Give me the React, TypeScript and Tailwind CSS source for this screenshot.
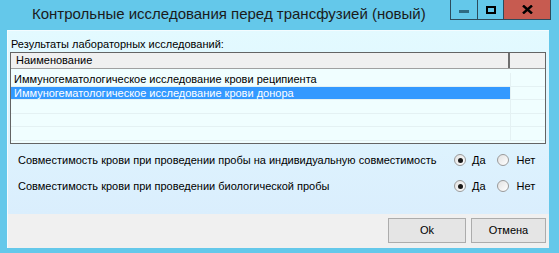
import React from "react";

function Radio({ checked }: { checked: boolean }) {
  return (
    <span className="relative inline-flex h-[12px] w-[12px] items-center justify-center rounded-full border border-[#9a9a9a] bg-gradient-to-br from-[#e2e2e2] to-[#ffffff]">
      {checked && <span className="h-[5px] w-[5px] rounded-full bg-[#1a1a1a]" />}
    </span>
  );
}

function OptionRow({ text }: { text: string }) {
  return (
    <div className="flex h-[26px] items-center">
      <div className="w-[440px] pl-[8px]">{text}</div>
      <div className="flex items-center gap-[6px] pl-[4px]">
        <Radio checked />
        <span>Да</span>
      </div>
      <div className="flex items-center gap-[8px] pl-[11px]">
        <Radio checked={false} />
        <span>Нет</span>
      </div>
    </div>
  );
}

export default function App() {
  const font = { fontFamily: '"Liberation Sans", Arial, sans-serif' };
  return (
    <div className="relative h-[253px] w-[559px] overflow-hidden bg-[#64c8ea] text-[11px] text-black" style={font}>
      {/* title bar */}
      <div className="relative flex h-[30px] items-start">
        <div className="pl-[32px] pt-[4px] text-[15px] leading-[20px] text-[#1b1b1b]">
          Контрольные исследования перед трансфузией (новый)
        </div>
        <div className="absolute left-[450px] top-0 flex h-[20px] border border-t-0 border-[#2c4b5c]">
          <div className="flex w-[27px] items-center justify-center border-r border-[#2c4b5c]">
            <div className="mt-[4px] h-[3px] w-[10px] bg-[#2e6a82]" />
          </div>
          <div className="flex w-[26px] items-center justify-center border-r border-[#2c4b5c]">
            <div className="h-[8px] w-[10px] border-2 border-black" />
          </div>
          <div className="flex w-[46px] items-center justify-center bg-[#c75b50]">
            <svg width="11" height="9" viewBox="0 0 11 9">
              <path d="M1 0.5 L10 8.5 M10 0.5 L1 8.5" stroke="#000" strokeWidth="2.4" />
            </svg>
          </div>
        </div>
      </div>
      {/* client area */}
      <div className="ml-[7px] flex h-[218px] w-[542px] flex-col border-l border-t border-[#f4fcff]">
        <div className="h-[183px] bg-gradient-to-b from-[#e3faff] to-[#daeefd] px-[2px]">
          <div className="pl-[1px] pt-[6px] leading-[14px]">Результаты лабораторных исследований:</div>
          <div className="mt-[1px] h-[92px] w-[536px] border border-[#646464] bg-[#f0feff]">
            <div className="flex h-[16px] border-b border-[#a0a0a0] bg-[#f0f0f0] leading-[15px]">
              <div className="w-[499px] border-r-2 border-[#6e6e6e] pl-[5px]">Наименование</div>
              <div className="flex-1" />
            </div>
            <div className="pt-[4px]">
              {[
                { t: "Иммуногематологическое исследование крови реципиента", sel: false },
                { t: "Иммуногематологическое исследование крови донора", sel: true },
                { t: "", sel: false },
                { t: "", sel: false },
                { t: "", sel: false },
              ].map((r, i) => (
                <div key={i} className="flex h-[13.5px] border-b border-[#e4f1f3]">
                  <div
                    className={
                      "w-[499px] pl-[3px] leading-[13px] " +
                      (r.sel ? "bg-[#3399ff] text-white" : "")
                    }
                  >
                    {r.t}
                  </div>
                  <div className="flex-1 border-l border-[#e4f1f3]" />
                </div>
              ))}
            </div>
          </div>
          <div className="pt-[3px]">
            <OptionRow text="Совместимость крови при проведении пробы на индивидуальную совместимость" />
            <OptionRow text="Совместимость крови при проведении биологической пробы" />
          </div>
        </div>
        <div className="flex flex-1 items-start justify-end gap-[5px] bg-[#f0f0f0] pr-[3px] pt-[4px]">
          <button className="h-[25px] w-[78px] border border-[#acacac] bg-[#e5e5e5] text-[11px]">Ok</button>
          <button className="h-[25px] w-[75px] border border-[#acacac] bg-[#e5e5e5] text-[11px]">Отмена</button>
        </div>
      </div>
    </div>
  );
}
